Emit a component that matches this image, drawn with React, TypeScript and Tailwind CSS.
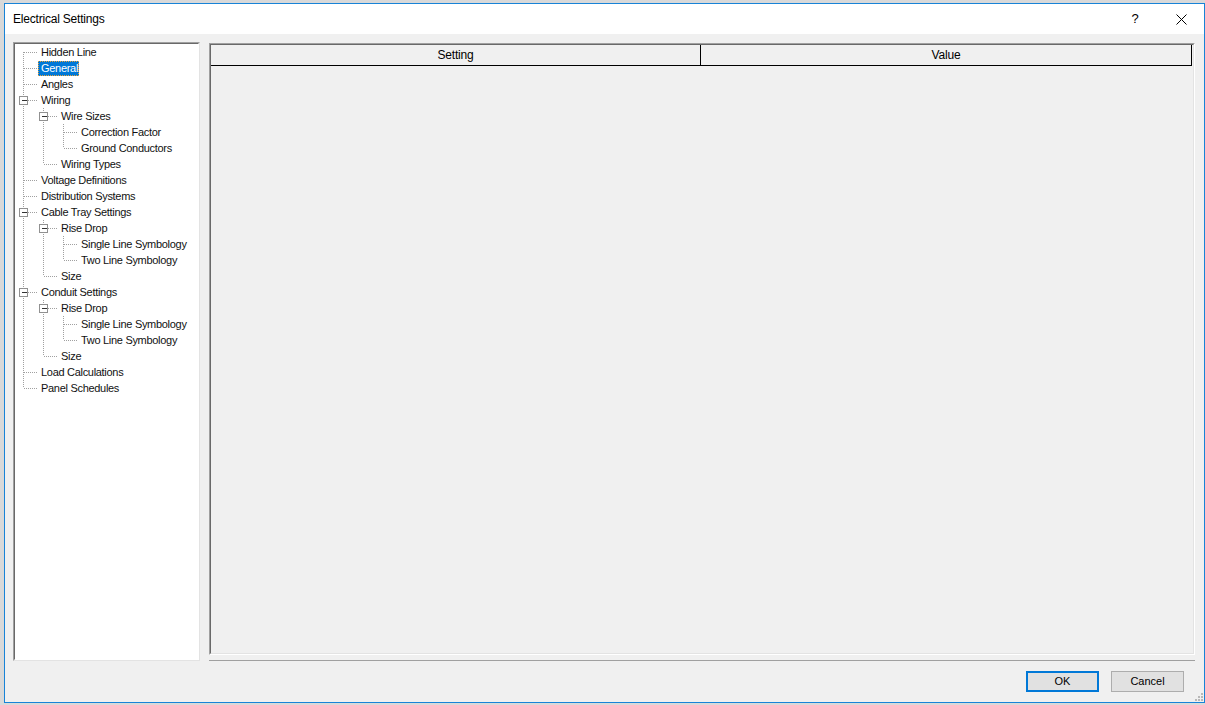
import React from "react";

type Node = { label: string; level: number; open?: boolean; selected?: boolean };

const nodes: Node[] = [
  { label: "Hidden Line", level: 0 },
  { label: "General", level: 0, selected: true },
  { label: "Angles", level: 0 },
  { label: "Wiring", level: 0, open: true },
  { label: "Wire Sizes", level: 1, open: true },
  { label: "Correction Factor", level: 2 },
  { label: "Ground Conductors", level: 2 },
  { label: "Wiring Types", level: 1 },
  { label: "Voltage Definitions", level: 0 },
  { label: "Distribution Systems", level: 0 },
  { label: "Cable Tray Settings", level: 0, open: true },
  { label: "Rise Drop", level: 1, open: true },
  { label: "Single Line Symbology", level: 2 },
  { label: "Two Line Symbology", level: 2 },
  { label: "Size", level: 1 },
  { label: "Conduit Settings", level: 0, open: true },
  { label: "Rise Drop", level: 1, open: true },
  { label: "Single Line Symbology", level: 2 },
  { label: "Two Line Symbology", level: 2 },
  { label: "Size", level: 1 },
  { label: "Load Calculations", level: 0 },
  { label: "Panel Schedules", level: 0 },
];

// work out which siblings are last and which ancestor lines keep running
function buildRows(list: Node[]) {
  const isLast = list.map((n, i) => {
    for (let j = i + 1; j < list.length; j++) {
      if (list[j].level < n.level) return true;
      if (list[j].level === n.level) return false;
    }
    return true;
  });
  const stack: boolean[] = [];
  return list.map((n, i) => {
    stack.length = n.level;
    const guides = stack.map((last) => !last);
    stack.push(isLast[i]);
    return { ...n, last: isLast[i], first: i === 0, guides };
  });
}

const rows = buildRows(nodes);
const DOT = "#a0a0a0";

function Connectors({ level, last, first, open, guides }: { level: number; last: boolean; first: boolean; open?: boolean; guides: boolean[] }) {
  const w = 23 + level * 20;
  const x0 = 8 + level * 20 + 0.5;
  return (
    <svg width={w} height={16} className="shrink-0" shapeRendering="crispEdges">
      {guides.map((on, a) =>
        on ? <line key={a} x1={8 + a * 20 + 0.5} y1={0} x2={8 + a * 20 + 0.5} y2={16} stroke={DOT} strokeDasharray="1 1" /> : null
      )}
      <line x1={x0} y1={first ? 8 : 0} x2={x0} y2={last ? 8 : 16} stroke={DOT} strokeDasharray="1 1" />
      <line x1={x0} y1={8.5} x2={w} y2={8.5} stroke={DOT} strokeDasharray="1 1" />
      {open && (
        <g>
          <rect x={x0 - 4} y={4.5} width={8} height={8} fill="#ffffff" stroke="#919191" />
          <line x1={x0 - 2} y1={8.5} x2={x0 + 3} y2={8.5} stroke="#333333" />
        </g>
      )}
    </svg>
  );
}

function Tree() {
  return (
    <div className="w-[187px] h-[619px] shrink-0 border border-t-[#a0a0a0] border-l-[#a0a0a0] border-b-[#e3e3e3] border-r-[#e3e3e3]">
      <div className="h-full bg-white border border-t-[#696969] border-l-[#696969] border-b-white border-r-white">
        <div className="flex flex-col tracking-[-0.3px]">
          {rows.map((r, i) => (
            <div key={i} className="flex items-center h-[16px]">
              <Connectors level={r.level} last={r.last} first={r.first} open={r.open} guides={r.guides} />
              <span
                className={
                  r.selected
                    ? "h-[15px] leading-[15px] pl-[3px] pr-[1px] bg-[#0078d7] text-white outline-1 outline-dotted outline-[#e8a33c] -outline-offset-1"
                    : "h-[15px] leading-[15px] pl-[3px] pr-[1px] text-[#111]"
                }
              >
                {r.label}
              </span>
            </div>
          ))}
        </div>
      </div>
    </div>
  );
}

function Grid() {
  return (
    <div className="flex-1 flex flex-col mt-[1px]">
      <div className="h-[612px] border border-t-[#a0a0a0] border-l-[#a0a0a0] border-b-white border-r-white">
        <div className="h-full bg-[#f0f0f0] border border-t-[#696969] border-l-[#696969] border-b-[#e3e3e3] border-r-[#e3e3e3]">
          <div className="flex h-[21px] text-[12px] tracking-[-0.2px]">
            <div className="w-[490px] flex items-center justify-center border-b border-r border-black">Setting</div>
            <div className="w-[491px] flex items-center justify-center border-b border-r border-black">Value</div>
          </div>
        </div>
      </div>
      <div className="mt-[5px] h-[1px] bg-[#a0a0a0]" />
    </div>
  );
}

export default function App() {
  return (
    <div className="w-[1205px] h-[705px] overflow-hidden bg-[#d9d9d9] pt-[3px] pl-[4px]" style={{ fontFamily: '"Liberation Sans", Arial, sans-serif' }}>
      <div className="relative w-[1201px] h-[700px] border border-[#1883d7] bg-[#f0f0f0] flex flex-col text-[11px] text-black">
        {/* title bar */}
        <div className="h-[30px] bg-white flex items-center shrink-0">
          <span className="pl-[8px] text-[12px] tracking-[-0.2px]">Electrical Settings</span>
          <div className="ml-auto flex h-full">
            <div className="w-[46px] flex items-center justify-center text-[13px]">?</div>
            <div className="w-[46px] flex items-center justify-center">
              <svg width="11" height="11" viewBox="0 0 11 11">
                <path d="M0.5 0.5 L10.5 10.5 M10.5 0.5 L0.5 10.5" stroke="#000" strokeWidth="1" fill="none" />
              </svg>
            </div>
          </div>
        </div>

        <div className="flex gap-[9px] pt-[8px] pl-[8px] pr-[9px]">
          <Tree />
          <Grid />
        </div>

        <div className="flex justify-end gap-[12px] pr-[20px] mt-[10px]">
          <button className="w-[73px] h-[21px] bg-[#e1e1e1] border-2 border-[#0078d7] flex items-center justify-center">OK</button>
          <button className="w-[73px] h-[21px] bg-[#e1e1e1] border border-[#adadad] flex items-center justify-center">Cancel</button>
        </div>

        {/* size grip */}
        <svg className="absolute right-[1px] bottom-[1px]" width="8" height="8" viewBox="0 0 8 8" shapeRendering="crispEdges">
          <rect x="6" y="0" width="2" height="2" fill="#b8b8b8" />
          <rect x="3" y="3" width="2" height="2" fill="#b8b8b8" />
          <rect x="6" y="3" width="2" height="2" fill="#b8b8b8" />
          <rect x="0" y="6" width="2" height="2" fill="#b8b8b8" />
          <rect x="3" y="6" width="2" height="2" fill="#b8b8b8" />
          <rect x="6" y="6" width="2" height="2" fill="#b8b8b8" />
        </svg>
      </div>
    </div>
  );
}
